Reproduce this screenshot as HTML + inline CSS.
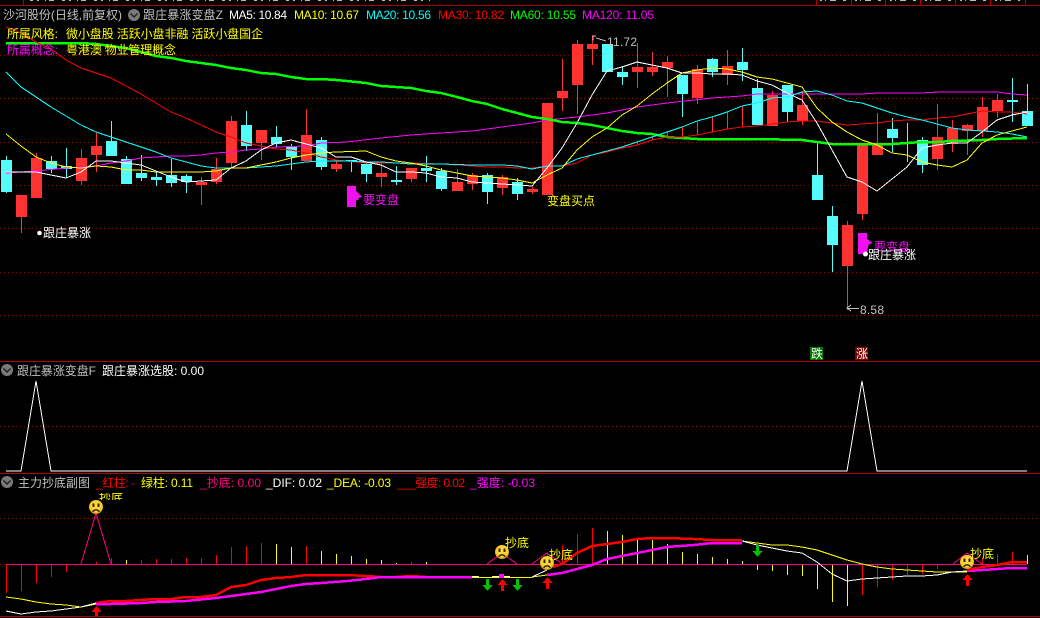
<!DOCTYPE html>
<html><head><meta charset="utf-8"><style>
html,body{margin:0;padding:0;background:#000;width:1040px;height:618px;overflow:hidden}
svg{display:block;position:absolute;left:0;top:0}
text{font-family:"Liberation Sans","WenQuanYi Zen Hei","Noto Sans CJK SC",sans-serif;font-size:12px;white-space:pre}
</style></head><body>
<svg width="1040" height="618" viewBox="0 0 1040 618" xmlns="http://www.w3.org/2000/svg">
<defs><radialGradient id="f" cx="50%" cy="42%" r="60%"><stop offset="0" stop-color="#FFE24A"/><stop offset=".7" stop-color="#F8CC30"/><stop offset="1" stop-color="#B8901A"/></radialGradient>
<clipPath id="c1"><rect x="90" y="493" width="40" height="7"/></clipPath>
<g id="sad"><circle r="7" fill="url(#f)"/><path d="M-3.500-3.500h2v3.500h-2zM1.500-3.500h2v3.500h-2z" fill="#3A2400"/><path d="M-3.500 4.800Q0 0.800 3.500 4.800" fill="none" stroke="#3A2400" stroke-width="1.400"/></g></defs>
<rect width="1040" height="618" fill="#000"/>
<g shape-rendering="crispEdges" fill="none">
<!-- top strip -->
<path d="M0 5.5H1040M0 361.5H1040M0 473.5H1040M0 616.5H1040" stroke="#B00000"/>
<path d="M23.5 0V5M816.5 0V5M851.5 0V5M885.5 0V5M920.5 0V5M955.5 0V5M990.5 0V5M1025.5 0V5" stroke="#B00000"/>
<path d="M30 .5H430" stroke="#BBB" stroke-dasharray="3 4 2 6 1 3 5 8"/>
<path d="M820 .5H1020" stroke="#BBB" stroke-dasharray="2 3 1 4 6 7 3 9"/>
<!-- dotted grid -->
<path d="M0 55.5H1040M0 98.5H1040M0 142.5H1040M0 185.5H1040M0 228.5H1040M0 272.5H1040M0 315.5H1040M0 426.5H1040M0 518.5H1040M0 564.5H6" stroke="#8C0000" stroke-dasharray="1 3"/>
<!-- red wicks -->
<path stroke="#FF3232" d="M21.5 195V233M36.5 153V198M81.5 149V185M96.5 133V172M201.5 177V205M216.5 158V184M231.5 116V168M261.5 130V160M306.5 109V161M336.5 160V172M381.5 163V187M411.5 168V182M457.5 169V191M472.5 173V190M502.5 175V195M532.5 187V194M562.5 59V111M577.5 40V114M592.5 35V65M637.5 43V88M652.5 52V76M667.5 56V97M697.5 65V104M727.5 50V85M772.5 91V126M802.5 91V125M847.5 221V310M862.5 145V220M877.5 113V155M937.5 104V170M952.5 120V152M967.5 124V155M982.5 97V137M997.5 94V118M637.5 142V145M652.5 137V140M667.5 132V137M682.5 127V137M697.5 121V135M712.5 117V132M727.5 112V129M742.5 106V127M757.5 103V126M772.5 98V124M787.5 97V122M802.5 92V121"/>
<!-- cyan wicks -->
<path stroke="#54FCFC" d="M6.5 156V193M51.5 156V173M66.5 148V178M111.5 121V156M126.5 156V184M141.5 155V181M156.5 171V186M171.5 159V187M186.5 174V193M246.5 111V151M276.5 126V148M291.5 144V170M321.5 137V170M351.5 160V172M366.5 162V182M396.5 166V185M426.5 156V182M441.5 168V191M487.5 173V204M517.5 178V200M622.5 66V85M682.5 75V117M712.5 58V77M742.5 48V81M757.5 79V125M787.5 85V122M817.5 143V200M832.5 206V272M892.5 118V152M907.5 123V162M922.5 137V173M1012.5 78V122M1027.5 84V126"/>
<!-- red bodies -->
<path fill="#FF3232" d="M16 195h11v22h-11zM31 158h11v40h-11zM76 158h11v23h-11zM91 146h11v9h-11zM196 182h11v3h-11zM211 169h11v13h-11zM226 121h11v42h-11zM256 130h11v13h-11zM301 135h11v26h-11zM331 164h11v5h-11zM376 173h11v4h-11zM406 168h11v11h-11zM452 182h11v9h-11zM467 175h11v9h-11zM497 177h11v11h-11zM527 189h11v3h-11zM542 103h11v92h-11zM557 91h11v7h-11zM572 44h11v41h-11zM587 44h11v5h-11zM632 67h11v5h-11zM647 67h11v5h-11zM662 62h11v6h-11zM692 69h11v29h-11zM722 66h11v9h-11zM767 95h11v31h-11zM797 105h11v16h-11zM842 225h11v41h-11zM857 145h11v69h-11zM872 145h11v10h-11zM932 137h11v22h-11zM947 128h11v16h-11zM962 125h11v6h-11zM977 107h11v24h-11zM992 100h11v11h-11z"/>
<!-- cyan bodies -->
<path fill="#54FCFC" d="M1 160h11v32h-11zM46 161h11v8h-11zM61 166h11v3h-11zM106 141h11v15h-11zM121 159h11v25h-11zM136 173h11v5h-11zM151 177h11v3h-11zM166 175h11v8h-11zM181 176h11v6h-11zM241 125h11v21h-11zM271 137h11v7h-11zM286 146h11v11h-11zM316 140h11v27h-11zM346 160h11v1h-11zM361 164h11v10h-11zM391 180h11v2h-11zM421 168h11v3h-11zM436 171h11v18h-11zM482 175h11v17h-11zM512 182h11v12h-11zM602 44h11v28h-11zM617 72h11v5h-11zM677 75h11v19h-11zM707 59h11v13h-11zM737 62h11v8h-11zM752 88h11v37h-11zM782 85h11v27h-11zM812 175h11v25h-11zM827 216h11v29h-11zM887 129h11v9h-11zM902 142h11v2h-11zM917 140h11v25h-11zM1007 100h11v2h-11zM1022 111h11v15h-11z"/>
<!-- MA lines -->
<polyline stroke="#FF00FF" points="6,173 36,171 66,168 96,166 111,163 126,161 141,158 156,157 171,156 186,156 201,155 216,153 231,152 246,150 261,149 276,147 306,146 321,143 347,142 381,138 411,135 441,133 472,131 502,127 532,123 547,120 577,117 607,113 637,107 667,103 694,100 712,98 742,96 757,94 802,94 862,94 877,93 922,93 937,92 997,92 1012,94 1027,95"/>
<polyline stroke="#00FF00" stroke-width="2.5" points="6,43 81,43 96,44 111,46 126,48 141,52 156,56 171,58 186,61 201,63 216,65 231,68 246,70 261,73 276,74 291,77 306,79 321,79 336,80 347,81 366,83 381,86 396,87 411,88 426,91 441,93 457,97 472,101 487,104 502,109 517,113 532,117 547,119 562,122 577,123 592,125 607,128 622,131 637,133 652,134 667,137 682,138 697,139 757,139 802,140 817,142 832,144 892,144 907,143 922,142 937,142 952,141 982,140 997,139 1027,138"/>
<polyline stroke="#FF0000" points="6,27 21,33 36,42 51,49 66,60 81,68 96,73 111,78 126,86 141,94 156,103 171,112 186,118 201,125 216,132 231,137 246,143 261,146 276,149 291,150 306,153 321,157 336,160 366,163 411,163 441,164 457,165 472,166 487,167 502,167 517,168 532,168 547,166 562,166 577,163 592,155 607,152 622,148 637,145 652,140 667,137 682,137 697,135 712,132 727,129 742,127 757,126 772,124 787,122 802,121 817,121 832,123 847,125 862,124 877,123 892,121 907,120 922,120 937,118 952,117 967,114 982,111 997,112 1012,112 1027,114"/>
<polyline stroke="#00FFFF" points="6,72 21,87 36,97 51,107 66,116 81,125 96,132 111,137 126,142 141,147 156,152 171,158 186,162 201,166 216,168 231,168 246,168 261,167 276,166 291,164 306,162 321,161 347,161 366,162 381,162 396,163 411,164 441,164 472,165 502,165 517,166 532,169 547,166 562,166 577,159 592,155 607,151 622,147 637,142 652,137 667,132 682,127 697,121 712,117 727,112 742,106 757,103 772,98 787,97 802,92 817,91 832,95 847,101 862,103 877,108 892,113 907,117 922,120 937,124 952,128 967,130 982,131 997,132 1012,134 1027,137"/>
<polyline stroke="#FFFF00" points="6,134 21,146 36,157 51,163 66,167 81,168 96,166 111,167 126,170 141,170 156,172 186,172 201,172 216,171 231,168 246,168 261,165 276,162 291,158 306,155 321,153 336,152 366,151 381,157 396,161 411,163 426,166 441,170 457,173 472,176 487,177 502,178 517,180 532,183 547,175 562,168 577,150 592,137 607,128 622,115 637,106 652,94 667,83 682,73 697,70 712,68 727,69 742,72 757,77 772,79 787,83 802,87 817,108 832,122 847,132 862,140 877,145 892,153 907,155 922,162 937,165 952,167 967,160 982,143 997,135 1012,131 1027,127"/>
<polyline stroke="#FFFFFF" points="6,172 36,172 51,175 66,178 81,172 96,161 111,161 126,163 141,165 156,171 171,177 186,182 201,181 216,180 231,168 246,161 261,150 276,143 291,140 306,144 321,148 336,157 351,157 366,162 381,165 396,172 411,172 426,173 441,177 457,178 472,182 487,183 502,184 517,185 532,186 547,168 562,148 577,123 592,95 607,71 622,67 637,62 652,65 667,68 682,73 697,73 712,74 727,74 742,75 757,81 772,85 787,93 802,100 817,123 832,150 847,177 862,182 877,191 892,179 907,167 922,148 937,145 952,143 967,143 982,132 997,120 1012,115 1027,112"/>
<!-- pane 2 -->
<polyline stroke="#FFFFFF" points="6,471 21,471 36,381 51,471 847,471 862,381 877,471 1027,471"/>
<!-- pane 3 bars -->
<path stroke="#FF0000" d="M6.5 564V593M21.5 564V591M36.5 564V583M51.5 564V577M66.5 564V572M96.5 562V564M111.5 558V564M141.5 560V564M156.5 559V564M171.5 559V564M186.5 558V564M201.5 558V564M216.5 555V564M231.5 547V564M246.5 546V564M261.5 543V564M306.5 546V564M411.5 562V564M547.5 553V564M562.5 545V564M577.5 534V564M592.5 528V564M862.5 564V595M877.5 564V587M892.5 564V580M907.5 564V575M922.5 564V574M937.5 564V569M982.5 558V564M997.5 554V564M1012.5 552V564"/>
<path stroke="#FFFF00" d="M126.5 560V564M276.5 544V564M291.5 547V564M321.5 551V564M336.5 554V564M351.5 556V564M366.5 559V564M381.5 560V564M396.5 563V564M426.5 562V564M607.5 531V564M622.5 535V564M637.5 540V564M652.5 540V564M667.5 544V564M682.5 552V564M697.5 554V564M712.5 557V564M727.5 559V564M742.5 561V564M757.5 564V570M772.5 564V571M787.5 564V575M802.5 564V576M817.5 564V589M832.5 564V602M847.5 564V606M1027.5 555V564"/>
<path stroke="#FF0080" d="M6 564.5H1027"/>
<polyline stroke="#FF0080" points="81,564 96,513 111,564"/>
<polyline stroke="#FF0080" points="487,564 502,553 517,564"/>
<polyline stroke="#FF0080" points="532,564 547,553 562,564"/>
<polyline stroke="#FF0080" points="953,564 967,553 982,564"/>
<!-- pane 3 lines -->
<polyline stroke="#FFFF00" points="6,597 21,599 36,602 51,604 66,605 81,607 96,604"/>
<polyline stroke="#FFFFFF" points="6,611 21,614 36,612 51,611 66,609 81,607 96,603"/>
<polyline stroke="#FF0000" stroke-width="2.5" points="96,603 111,601 126,601 141,600 156,599 171,599 186,597 201,597 216,595 231,587 246,585 261,580 276,578 291,577 306,575 347,575 366,576 381,577 396,577 411,576 426,577 472,577"/>
<polyline stroke="#FF00FF" stroke-width="2.5" points="96,604 111,604 141,603 156,602 186,601 216,598 231,596 246,594 261,592 276,589 291,586 306,584 321,583 347,581 366,579 381,577 472,577"/>
<path stroke="#FFFF00" d="M472 577.5H532"/>
<path stroke="#FFFFFF" d="M472 576.5H479M492 576.5H499M504 576.5H510"/>
<path fill="#FF00FF" d="M499 574h5v4h-5z"/>
<polyline stroke="#FFFF00" points="532,577 547,575"/>
<polyline stroke="#FFFFFF" points="532,577 547,570"/>
<polyline stroke="#FF00FF" stroke-width="2.5" points="547,575 562,573 577,569 592,565 607,559 622,556 637,553 652,550 667,547 694,545 712,543 742,543"/>
<polyline stroke="#FF0000" stroke-width="2.5" points="553,567 562,564 577,553 592,546 607,544 622,542 637,539 652,538 667,538 694,539 712,540 742,540"/>
<polyline stroke="#FFFF00" points="742,541 757,543 772,545 787,545 802,547 817,550 832,555 847,560 862,564 877,567 892,569 907,570 922,571 937,572 952,572 967,572"/>
<polyline stroke="#FFFFFF" points="742,541 757,545 772,548 787,551 802,553 817,562 832,574 847,581 862,579 877,578 892,577 907,576 922,576 937,575 952,572 967,571"/>
<polyline stroke="#FF00FF" stroke-width="2.5" points="967,571 982,570 997,569 1012,568 1027,568"/>
<polyline stroke="#FF0000" stroke-width="2.5" points="967,570 982,567 997,565 1012,562 1027,562"/>
</g>
<!-- arrows -->
<g shape-rendering="crispEdges">
<path fill="#FF0000" d="M96.5 606l5 6h-3.500v4h-3v-4h-3.500zM502.500 579l5 6h-3.500v6h-3v-6h-3.500zM547.500 577l5 6h-3.500v6h-3v-6h-3.500zM967.500 574l5 6h-3.500v6h-3v-6h-3.500z"/>
<path fill="#00C000" d="M487.500 591l-5-6h3.500v-6h3v6h3.500zM517.500 591l-5-6h3.500v-6h3v6h3.500zM757.500 557l-5-6h3.500v-6h3v6h3.500z"/>
<path fill="#F010F0" d="M347 186h9v5l6 6-4 1 1 2h-3v7h-9zM858 233h9v6l6 4-4 1-1 3-1 7h-9z"/>
<rect x="810" y="347" width="13" height="13" fill="#007800"/>
<rect x="855" y="347" width="13" height="13" fill="#800000"/>
</g>
<!-- faces -->
<use href="#sad" transform="translate(96,507)"/>
<use href="#sad" transform="translate(502,552)"/>
<use href="#sad" transform="translate(547,563)"/>
<use href="#sad" transform="translate(967,562)"/>
<circle cx="39.500" cy="233" r="2.300" fill="#fff"/>
<circle cx="865.500" cy="254" r="2.500" fill="#fff"/>
<!-- section icons -->
<g>
<circle cx="134" cy="15" r="6" fill="#7a7a7a"/><path d="M130.500 13.500l3.500 3.500 3.500-3.500" fill="none" stroke="#222" stroke-width="1.500"/>
<circle cx="7" cy="370" r="6" fill="#7a7a7a"/><path d="M3.500 368.500l3.500 3.500 3.500-3.500" fill="none" stroke="#222" stroke-width="1.500"/>
<circle cx="7" cy="482" r="6" fill="#7a7a7a"/><path d="M3.500 480.500l3.500 3.500 3.500-3.500" fill="none" stroke="#222" stroke-width="1.500"/>
</g>
<!-- price arrows -->
<g fill="none" stroke="#C0C0C0" shape-rendering="crispEdges">
<path d="M593 36v4M593 36h3M596 38l10 3"/>
<path d="M847 308.500h12M851 305l-4 3 4 3"/>
</g>
<!-- text -->
<text x="3" y="19" fill="#C0C0C0" textLength="119">沙河股份(日线,前复权)</text>
<text x="143" y="19" fill="#C0C0C0" textLength="80">跟庄暴涨变盘Z</text>
<text x="229" y="19" fill="#fff" textLength="58">MA5: 10.84</text>
<text x="294" y="19" fill="#ff0" textLength="65">MA10: 10.67</text>
<text x="366" y="19" fill="#0ff" textLength="65">MA20: 10.56</text>
<text x="438" y="19" fill="#f00" textLength="66">MA30: 10.82</text>
<text x="510" y="19" fill="#0f0" textLength="66">MA60: 10.55</text>
<text x="582" y="19" fill="#f0f" textLength="72">MA120: 11.05</text>
<text x="7" y="38" fill="#ff0" textLength="51">所属风格:</text>
<text x="66" y="38" fill="#ff0" textLength="197">微小盘股 活跃小盘非融 活跃小盘国企</text>
<text x="7" y="54" fill="#f0f" textLength="51">所属概念:</text>
<text x="66" y="54" fill="#ff0" textLength="110">粤港澳 物业管理概念</text>
<text x="607" y="46" fill="#C0C0C0" textLength="30">11.72</text>
<text x="860" y="314" fill="#C0C0C0" textLength="24">8.58</text>
<text x="43" y="237" fill="#fff" textLength="48">跟庄暴涨</text>
<text x="363" y="204" fill="#F010F0" textLength="36">要变盘</text>
<text x="874" y="251" fill="#F010F0" textLength="36">要变盘</text>
<text x="868" y="259" fill="#fff" textLength="48">跟庄暴涨</text>
<text x="547" y="205" fill="#ff0" textLength="48">变盘买点</text>
<text x="811" y="358" fill="#fff">跌</text>
<text x="856" y="358" fill="#fff">涨</text>
<text x="17" y="375" fill="#C0C0C0" textLength="79">跟庄暴涨变盘F</text>
<text x="102" y="375" fill="#fff" textLength="102">跟庄暴涨选股: 0.00</text>
<text x="18" y="487" fill="#C0C0C0" textLength="72">主力抄底副图</text>
<text x="96" y="487" fill="#f00" textLength="39">_红柱: -</text>
<text x="141" y="487" fill="#ff0" textLength="52">绿柱: 0.11</text>
<text x="200" y="487" fill="#FF0080" textLength="61">_抄底: 0.00</text>
<text x="266" y="487" fill="#fff" textLength="56">_DIF: 0.02</text>
<text x="327" y="487" fill="#ff0" textLength="64">_DEA: -0.03</text>
<text x="397" y="487" fill="#f00" textLength="68">___强度: 0.02</text>
<text x="470" y="487" fill="#f0f" textLength="65">_强度: -0.03</text>
<text x="99" y="502" fill="#ff0" textLength="24" clip-path="url(#c1)">抄底</text>
<text x="505" y="547" fill="#ff0" textLength="24">抄底</text>
<text x="549" y="559" fill="#ff0" textLength="24">抄底</text>
<text x="970" y="558" fill="#ff0" textLength="24">抄底</text>
</svg>
</body></html>
